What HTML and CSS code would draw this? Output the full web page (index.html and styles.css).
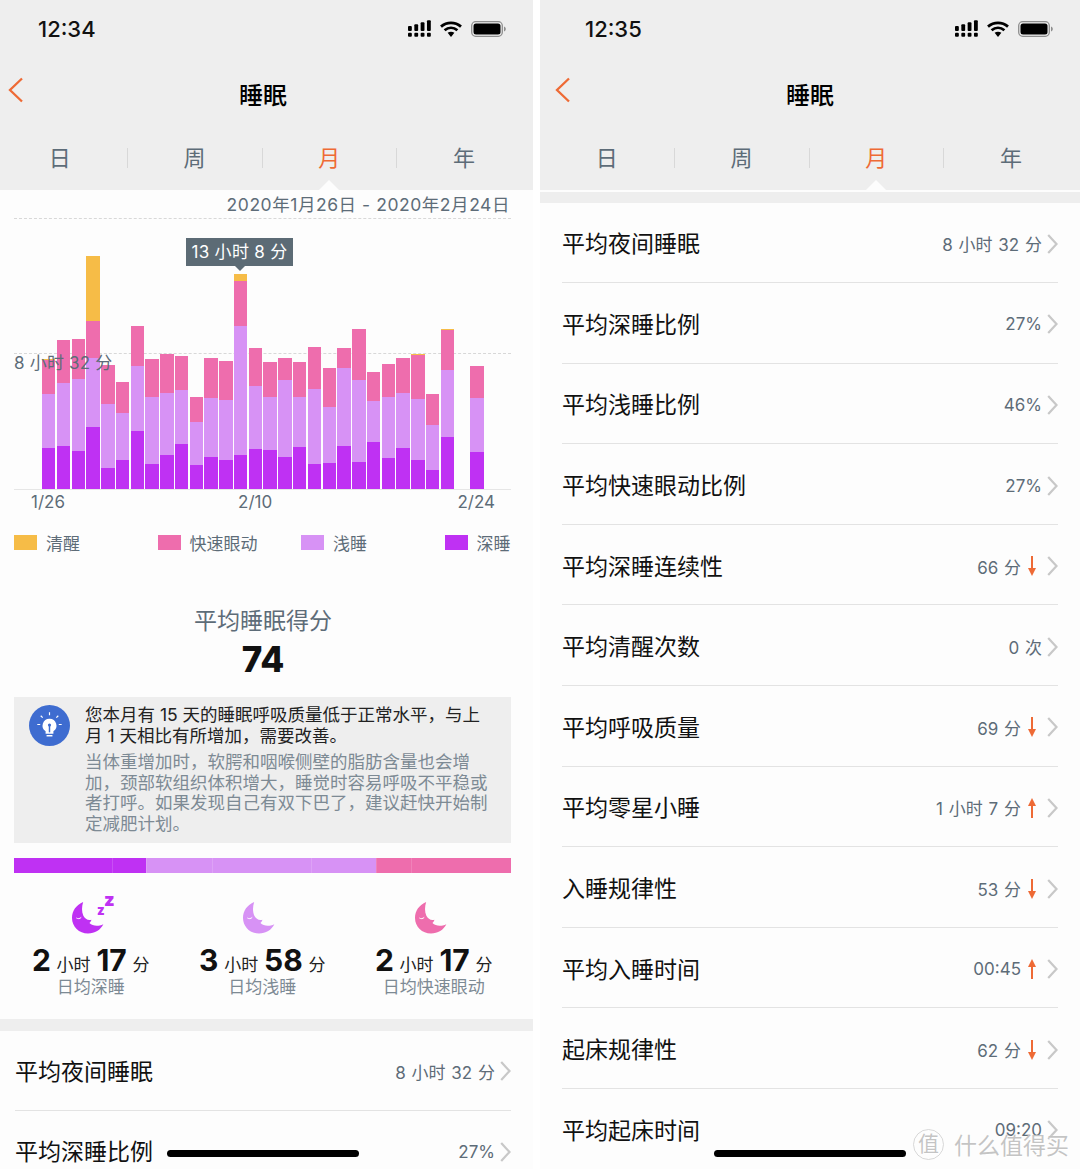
FILE: index.html
```html
<!DOCTYPE html>
<html lang="zh-CN">
<head>
    <meta charset="UTF-8">
    <meta name="viewport" content="width=device-width, initial-scale=1.0">
    <title>睡眠</title>
    <link rel="stylesheet" href="styles.css">
</head>
<body>
<svg class="defs" width="0" height="0">
    <symbol id="signal" viewBox="0 0 24 17">
        <g fill="#000">
            <rect x="0" y="6" width="4" height="5" rx="1"/><rect x="6.600" y="4" width="4" height="7" rx="1"/><rect x="13.200" y="2" width="4" height="9" rx="1"/><rect x="19.800" y="0" width="4" height="11" rx="1"/>
            <rect x="0" y="13" width="4" height="4" rx="1"/><rect x="6.600" y="13" width="4" height="4" rx="1"/><rect x="13.200" y="13" width="4" height="4" rx="1"/><rect x="19.800" y="13" width="4" height="4" rx="1"/>
        </g>
    </symbol>
    <symbol id="wifi" viewBox="0 0 22 16">
        <path d="M1 5.600C6.800.6 15.200.6 21 5.600M4.600 9.200c3.800-3.200 9-3.200 12.800 0" fill="none" stroke="#000" stroke-width="2.800"/>
        <path d="M7.600 11.800c2-1.500 4.800-1.500 6.800 0L11 16z" fill="#000"/>
    </symbol>
    <symbol id="battery" viewBox="0 0 35 16">
        <rect x=".7" y=".7" width="30.600" height="14.600" rx="4" fill="none" stroke="#8e8e8e" stroke-width="1.300"/>
        <rect x="2.500" y="2.500" width="27" height="11" rx="2.500" fill="#000"/>
        <path d="M33 5.500c1.300.4 1.800 1.400 1.800 2.500s-.5 2.100-1.800 2.500z" fill="#8e8e8e"/>
    </symbol>
    <symbol id="back" viewBox="0 0 16 26">
        <path d="M15 1.500 3 13l12 11.500" fill="none" stroke="#ee6a35" stroke-width="2.300"/>
    </symbol>
    <symbol id="chev" viewBox="0 0 11 20">
        <path d="M1.200 1 9.500 10l-8.300 9" fill="none" stroke="#c8c8c8" stroke-width="2.200"/>
    </symbol>
    <symbol id="down" viewBox="0 0 8 20">
        <path d="M4 0v13" stroke="#ee6a35" stroke-width="2"/><path d="M0 12h8l-4 8z" fill="#ee6a35"/>
    </symbol>
    <symbol id="up" viewBox="0 0 8 20">
        <path d="M4 20V7" stroke="#ee6a35" stroke-width="2"/><path d="M0 8h8L4 0z" fill="#ee6a35"/>
    </symbol>
    <symbol id="moon" viewBox="0 0 34 34">
        <path d="M11.500 1C4.500 4 0 10 0 17.500 0 26.500 7.300 33.500 16.500 33.500c7 0 13-3.700 15.800-9.500-5.500 2.500-11 2-14.300-1.300 1-.8 1.700-2 2-3.300-3.500 1-6.600-.8-8.300-4.100C9.800 10.800 10 5.500 11.500 1z" fill="currentColor"/>
        <path d="M4.500 17.500c1.500 1 3.500.9 5-.6" fill="none" stroke="#fff" stroke-width="1"/>
    </symbol>
</svg>

<div class="screens">
    <section class="phone phone-left">
        <div class="top">
            <div class="status">
                <span class="clock">12:34</span>
                <span class="status-icons">
                    <svg class="i-signal"><use href="#signal"/></svg>
                    <svg class="i-wifi"><use href="#wifi"/></svg>
                    <svg class="i-battery"><use href="#battery"/></svg>
                </span>
            </div>
            <div class="nav">
                <svg class="i-back"><use href="#back"/></svg>
                <h1>睡眠</h1>
            </div>
            <div class="tabs">
                <span class="tab">日</span><span class="tab">周</span><span class="tab active">月</span><span class="tab">年</span>
            </div>
        </div>

        <div class="daterange">2020年1月26日 - 2020年2月24日</div>

        <div class="chart">
            <div class="avg-line"></div>
            <div class="avg-label">8 小时 32 分</div>
            <div class="tip">13 小时 8 分</div>
            <div class="bars">
                <div class="bar"><i class="aw" style="height:1px"></i><i class="re" style="height:34px"></i><i class="li" style="height:54px"></i><i class="de" style="height:41px"></i></div>
                <div class="bar"><i class="re" style="height:43px"></i><i class="li" style="height:63px"></i><i class="de" style="height:43px"></i></div>
                <div class="bar"><i class="re" style="height:40px"></i><i class="li" style="height:72px"></i><i class="de" style="height:38px"></i></div>
                <div class="bar"><i class="aw" style="height:65px"></i><i class="re" style="height:37px"></i><i class="li" style="height:69px"></i><i class="de" style="height:62px"></i></div>
                <div class="bar"><i class="re" style="height:39px"></i><i class="li" style="height:64px"></i><i class="de" style="height:21px"></i></div>
                <div class="bar"><i class="re" style="height:31px"></i><i class="li" style="height:47px"></i><i class="de" style="height:29px"></i></div>
                <div class="bar"><i class="re" style="height:40px"></i><i class="li" style="height:65px"></i><i class="de" style="height:58px"></i></div>
                <div class="bar"><i class="re" style="height:38px"></i><i class="li" style="height:67px"></i><i class="de" style="height:25px"></i></div>
                <div class="bar"><i class="re" style="height:39px"></i><i class="li" style="height:62px"></i><i class="de" style="height:34px"></i></div>
                <div class="bar"><i class="re" style="height:34px"></i><i class="li" style="height:54px"></i><i class="de" style="height:45px"></i></div>
                <div class="bar"><i class="re" style="height:25px"></i><i class="li" style="height:43px"></i><i class="de" style="height:24px"></i></div>
                <div class="bar"><i class="re" style="height:40px"></i><i class="li" style="height:59px"></i><i class="de" style="height:32px"></i></div>
                <div class="bar"><i class="re" style="height:39px"></i><i class="li" style="height:60px"></i><i class="de" style="height:29px"></i></div>
                <div class="bar"><i class="aw" style="height:7px"></i><i class="re" style="height:45px"></i><i class="li" style="height:129px"></i><i class="de" style="height:34px"></i></div>
                <div class="bar"><i class="re" style="height:38px"></i><i class="li" style="height:63px"></i><i class="de" style="height:40px"></i></div>
                <div class="bar"><i class="re" style="height:35px"></i><i class="li" style="height:53px"></i><i class="de" style="height:39px"></i></div>
                <div class="bar"><i class="re" style="height:22px"></i><i class="li" style="height:77px"></i><i class="de" style="height:32px"></i></div>
                <div class="bar"><i class="re" style="height:35px"></i><i class="li" style="height:50px"></i><i class="de" style="height:42px"></i></div>
                <div class="bar"><i class="re" style="height:42px"></i><i class="li" style="height:75px"></i><i class="de" style="height:25px"></i></div>
                <div class="bar"><i class="re" style="height:39px"></i><i class="li" style="height:56px"></i><i class="de" style="height:26px"></i></div>
                <div class="bar"><i class="re" style="height:20px"></i><i class="li" style="height:78px"></i><i class="de" style="height:43px"></i></div>
                <div class="bar"><i class="re" style="height:51px"></i><i class="li" style="height:82px"></i><i class="de" style="height:27px"></i></div>
                <div class="bar"><i class="re" style="height:29px"></i><i class="li" style="height:41px"></i><i class="de" style="height:47px"></i></div>
                <div class="bar"><i class="re" style="height:33px"></i><i class="li" style="height:61px"></i><i class="de" style="height:31px"></i></div>
                <div class="bar"><i class="re" style="height:35px"></i><i class="li" style="height:55px"></i><i class="de" style="height:41px"></i></div>
                <div class="bar"><i class="aw" style="height:1px"></i><i class="re" style="height:44px"></i><i class="li" style="height:61px"></i><i class="de" style="height:29px"></i></div>
                <div class="bar"><i class="re" style="height:31px"></i><i class="li" style="height:45px"></i><i class="de" style="height:19px"></i></div>
                <div class="bar"><i class="aw" style="height:1px"></i><i class="re" style="height:40px"></i><i class="li" style="height:67px"></i><i class="de" style="height:52px"></i></div>
                <div class="bar"></div>
                <div class="bar"><i class="re" style="height:32px"></i><i class="li" style="height:54px"></i><i class="de" style="height:37px"></i></div>
            </div>
            <div class="axis"><span>1/26</span><span class="axis-mid">2/10</span><span>2/24</span></div>
        </div>

        <div class="legend">
            <span class="key"><i class="aw"></i>清醒</span>
            <span class="key"><i class="re"></i>快速眼动</span>
            <span class="key"><i class="li"></i>浅睡</span>
            <span class="key"><i class="de"></i>深睡</span>
        </div>

        <div class="score">
            <div class="score-title">平均睡眠得分</div>
            <div class="score-num">74</div>
        </div>

        <div class="tipbox">
            <svg class="bulb" viewBox="0 0 42 42">
                <circle cx="21" cy="21" r="21" fill="#3e6cd0"/>
                <path d="M21 14a7 7 0 0 0-4 12.800v2.700h8v-2.700A7 7 0 0 0 21 14z" fill="#fff"/>
                <path d="M18 31.500h6" stroke="#fff" stroke-width="1.500"/>
                <path d="M21 28v-7" stroke="#3e6cd0" stroke-width="1.500"/><circle cx="21" cy="20.500" r="1.600" fill="#3e6cd0"/>
                <path d="M21 7.500v3M12 11l2 2M30 11l-2 2M8.500 20h3M30.500 20h3" stroke="#fff" stroke-width="1.200"/>
            </svg>
            <div class="tipbox-text">
                <p class="lead">您本月有 15 天的睡眠呼吸质量低于正常水平，与上月 1 天相比有所增加，需要改善。</p>
                <p class="more">当体重增加时，软腭和咽喉侧壁的脂肪含量也会增加，颈部软组织体积增大，睡觉时容易呼吸不平稳或者打呼。如果发现自己有双下巴了，建议赶快开始制定减肥计划。</p>
            </div>
        </div>

        <div class="ratio">
            <i class="de" style="flex:99"></i><i class="de" style="flex:33"></i>
            <i class="li" style="flex:66"></i><i class="li" style="flex:99"></i><i class="li" style="flex:65"></i>
            <i class="re" style="flex:34"></i><i class="re" style="flex:100"></i>
        </div>

        <div class="stats">
            <div class="stat">
                <span class="moon-wrap">
                    <svg class="moon c-de"><use href="#moon"/></svg>
                    <b class="z-small c-de">z</b><b class="z-big c-de">z</b>
                </span>
                <div class="stat-val"><b>2</b> 小时 <b>17</b> 分</div>
                <div class="stat-name">日均深睡</div>
            </div>
            <div class="stat">
                <span class="moon-wrap"><svg class="moon c-li"><use href="#moon"/></svg></span>
                <div class="stat-val"><b>3</b> 小时 <b>58</b> 分</div>
                <div class="stat-name">日均浅睡</div>
            </div>
            <div class="stat">
                <span class="moon-wrap"><svg class="moon c-re"><use href="#moon"/></svg></span>
                <div class="stat-val"><b>2</b> 小时 <b>17</b> 分</div>
                <div class="stat-name">日均快速眼动</div>
            </div>
        </div>

        <div class="band"></div>

        <div class="rows rows-short">
            <div class="row"><span class="label">平均夜间睡眠</span><span class="val">8 小时 32 分</span><svg class="chev"><use href="#chev"/></svg></div>
            <div class="row"><span class="label">平均深睡比例</span><span class="val">27%</span><svg class="chev"><use href="#chev"/></svg></div>
        </div>
        <div class="home"></div>
    </section>

    <section class="phone">
        <div class="top">
            <div class="status">
                <span class="clock">12:35</span>
                <span class="status-icons">
                    <svg class="i-signal"><use href="#signal"/></svg>
                    <svg class="i-wifi"><use href="#wifi"/></svg>
                    <svg class="i-battery"><use href="#battery"/></svg>
                </span>
            </div>
            <div class="nav">
                <svg class="i-back"><use href="#back"/></svg>
                <h1>睡眠</h1>
            </div>
            <div class="tabs">
                <span class="tab">日</span><span class="tab">周</span><span class="tab active">月</span><span class="tab">年</span>
            </div>
        </div>
        <div class="band band-top"></div>

        <div class="rows rows-full">
            <div class="row"><span class="label">平均夜间睡眠</span><span class="val">8 小时 32 分</span><svg class="chev"><use href="#chev"/></svg></div>
            <div class="row"><span class="label">平均深睡比例</span><span class="val">27%</span><svg class="chev"><use href="#chev"/></svg></div>
            <div class="row"><span class="label">平均浅睡比例</span><span class="val">46%</span><svg class="chev"><use href="#chev"/></svg></div>
            <div class="row"><span class="label">平均快速眼动比例</span><span class="val">27%</span><svg class="chev"><use href="#chev"/></svg></div>
            <div class="row"><span class="label">平均深睡连续性</span><span class="val">66 分</span><svg class="arrow"><use href="#down"/></svg><svg class="chev"><use href="#chev"/></svg></div>
            <div class="row"><span class="label">平均清醒次数</span><span class="val">0 次</span><svg class="chev"><use href="#chev"/></svg></div>
            <div class="row"><span class="label">平均呼吸质量</span><span class="val">69 分</span><svg class="arrow"><use href="#down"/></svg><svg class="chev"><use href="#chev"/></svg></div>
            <div class="row"><span class="label">平均零星小睡</span><span class="val">1 小时 7 分</span><svg class="arrow"><use href="#up"/></svg><svg class="chev"><use href="#chev"/></svg></div>
            <div class="row"><span class="label">入睡规律性</span><span class="val">53 分</span><svg class="arrow"><use href="#down"/></svg><svg class="chev"><use href="#chev"/></svg></div>
            <div class="row"><span class="label">平均入睡时间</span><span class="val">00:45</span><svg class="arrow"><use href="#up"/></svg><svg class="chev"><use href="#chev"/></svg></div>
            <div class="row"><span class="label">起床规律性</span><span class="val">62 分</span><svg class="arrow"><use href="#down"/></svg><svg class="chev"><use href="#chev"/></svg></div>
            <div class="row"><span class="label">平均起床时间</span><span class="val">09:20</span><svg class="chev"><use href="#chev"/></svg></div>
        </div>
        <div class="home"></div>
    </section>
</div>

<div class="watermark"><span class="wm-logo">值</span><span>什么值得买</span></div>
</body>
</html>
```

FILE: styles.css
```css
html, body {
    margin: 0;
    padding: 0;
    background: #fff;
}
body {
    width: 1080px;
    height: 1169px;
    overflow: hidden;
    position: relative;
    font-family: Inter, "Noto Sans CJK SC", sans-serif;
    color: #5d6c78;
}
.defs {
    position: absolute;
}
.screens {
    display: flex;
    gap: 7px;
}
.phone {
    position: relative;
    flex: none;
    width: 540px;
    height: 1169px;
    overflow: hidden;
    background: #fdfdfd;
}
/* the left shot is cropped 7px on its left side */
.phone-left {
    margin-left: -7px;
}

/* header */
.top {
    background: #eeeeee;
    height: 190px;
}
.status {
    display: flex;
    justify-content: space-between;
    align-items: center;
    height: 57px;
    padding: 0 27px 0 45px;
}
.clock {
    font-size: 22px;
    font-weight: 500;
    color: #111;
}
.status-icons {
    display: flex;
    align-items: center;
    gap: 9px;
}
.i-signal { width: 23px; height: 17px; }
.i-wifi { width: 22px; height: 16px; }
.i-battery { width: 35px; height: 16px; }
.nav {
    position: relative;
    height: 64px;
    text-align: center;
}
.nav h1 {
    margin: 0;
    font-size: 24px;
    font-weight: 500;
    line-height: 78px;
    color: #000;
}
.i-back {
    position: absolute;
    left: 14px;
    top: 20px;
    width: 16px;
    height: 26px;
}
.tabs {
    display: flex;
    padding: 5px 2px 0 0;
    height: 69px;
    box-sizing: border-box;
    align-items: center;
}
.tab {
    flex: 1;
    text-align: center;
    font-size: 22px;
    line-height: 20px;
    border-left: 1px solid #d8d8d8;
}
.tab:first-child {
    border-left: 0;
}
.tab.active {
    position: relative;
    color: #ee6a35;
}
.tab.active::after {
    content: "";
    position: absolute;
    left: 50%;
    bottom: -22px;
    margin-left: -10px;
    border: 10px solid transparent;
    border-top: 0;
    border-bottom-color: #fdfdfd;
}

/* left screen chart */
.daterange {
    text-align: right;
    padding: 4px 23px 0 0;
    height: 24px;
    line-height: 22px;
    font-size: 17.500px;
    letter-spacing: .55px;
}
.chart {
    position: relative;
    margin: 0 22px 0 21px;
    height: 298px;
    border-top: 1px dashed #d8d8d8;
}
.avg-line {
    position: absolute;
    left: 0;
    right: 0;
    top: 134px;
    border-top: 1px dashed #d8d8d8;
}
.avg-label {
    position: absolute;
    left: 0;
    top: 134px;
    font-size: 17px;
    line-height: 20px;
    letter-spacing: .2px;
    z-index: 2;
}
.tip {
    position: absolute;
    left: 172px;
    top: 19px;
    width: 107px;
    height: 28px;
    line-height: 28px;
    background: #5c6b75;
    color: #fff;
    font-size: 17px;
    letter-spacing: .3px;
    text-align: center;
    white-space: nowrap;
    z-index: 2;
}
.tip::after {
    content: "";
    position: absolute;
    left: 49px;
    bottom: -5px;
    border: 5px solid transparent;
    border-bottom: 0;
    border-top-color: #5c6b75;
}
.bars {
    position: absolute;
    left: 28px;
    top: 0;
    width: 441.500px;
    height: 270px;
    display: flex;
    gap: 1.300px;
    align-items: flex-end;
}
.bars::before {
    content: "";
    position: absolute;
    left: -28px;
    right: -27.500px;
    bottom: -1px;
    border-bottom: 1px solid #e6e6e6;
}
.bar {
    flex: 1;
    display: flex;
    flex-direction: column;
}
.bar i {
    display: block;
}
.aw { background: #f6bc47; }
.re { background: #ee6dad; }
.li { background: #d792f5; }
.de { background: #bf31f3; }
.c-de { color: #bf31f3; }
.c-li { color: #d792f5; }
.c-re { color: #ee6dad; }
.axis {
    position: absolute;
    left: 17px;
    right: 16px;
    top: 272px;
    display: flex;
    justify-content: space-between;
    font-size: 17px;
    line-height: 22px;
}
.axis-mid {
    margin-right: 12px;
}
.legend {
    display: grid;
    grid-template-columns: repeat(3, 143.500px) auto;
    margin: 0 22px 0 21px;
    height: 50px;
    align-items: center;
}
.key {
    display: flex;
    align-items: center;
    font-size: 17px;
}
.key i {
    width: 23px;
    height: 15px;
    margin-right: 9px;
}

/* score */
.score {
    text-align: center;
    padding-top: 39px;
    height: 130px;
    box-sizing: border-box;
}
.score-title {
    font-size: 23px;
    line-height: 30px;
}
.score-num {
    font-size: 35px;
    font-weight: 800;
    line-height: 46px;
    color: #111;
}
.tipbox {
    display: flex;
    margin: 0 22px 0 21px;
    padding: 8px 0 8px 15px;
    background: #eeeeee;
    gap: 15px;
    height: 146px;
    box-sizing: border-box;
}
.bulb {
    flex: none;
    width: 41px;
    height: 41px;
}
.tipbox-text {
    width: 410px;
}
.tipbox-text p {
    margin: 0;
    font-size: 17.500px;
    line-height: 20.500px;
}
.lead {
    color: #222;
    padding-bottom: 6px;
}
.more {
    color: #7d8a94;
}
.ratio {
    display: flex;
    height: 15px;
    margin: 15px 22px 0 21px;
}
.ratio i + i {
    border-left: 1px solid rgba(255, 255, 255, .15);
}

/* stats */
.stats {
    display: grid;
    grid-template-columns: repeat(3, 171.500px);
    margin-left: 12px;
    padding-top: 28px;
    height: 146px;
    box-sizing: border-box;
}
.stat {
    text-align: center;
}
.moon-wrap {
    position: relative;
    display: block;
    height: 33px;
}
.moon {
    width: 33px;
    height: 33px;
    margin-left: -5px;
}
.z-small, .z-big {
    position: absolute;
    font-weight: 900;
    line-height: 1;
}
.z-small {
    left: 92px;
    top: 3px;
    font-size: 13px;
}
.z-big {
    left: 99px;
    top: -10px;
    font-size: 18px;
}
.stat-val {
    font-size: 17px;
    word-spacing: 1px;
    color: #222;
    line-height: 36px;
    margin-top: 8px;
    white-space: nowrap;
}
.stat-val b {
    font-size: 30px;
    font-weight: 700;
    color: #111;
}
.stat-name {
    font-size: 17px;
    line-height: 20px;
    margin-top: -6px;
    color: #7d8a94;
}
.band {
    height: 12px;
    background: #eeeeee;
}
.band-top {
    margin-top: 2px;
    height: 11px;
}

/* list rows */
.rows {
    margin: 0 22px;
}
.rows-short {
    margin-top: -1px;
}
.rows-full {
    margin-top: -.5px;
}
.row {
    display: flex;
    align-items: center;
    height: 79.600px;
    border-bottom: 1px solid #e3e3e3;
}
.rows .row:last-child {
    border-bottom: 0;
}
.label {
    flex: 1;
    font-size: 23px;
    color: #111;
}
.val {
    font-size: 17px;
    word-spacing: 1px;
    margin-top: 3px;
}
.arrow {
    width: 8px;
    height: 20px;
    margin: 3px 6px 0 7px;
}
.chev {
    width: 11px;
    height: 20px;
    margin: 3px 0 0 5px;
}
.home {
    position: absolute;
    left: 174px;
    top: 1150px;
    width: 192px;
    height: 7px;
    border-radius: 4px;
    background: #000;
}

.watermark {
    position: absolute;
    left: 913px;
    top: 1127px;
    display: flex;
    align-items: center;
    gap: 10px;
    font-size: 23px;
    color: rgba(170, 170, 170, .7);
    text-shadow: 0 0 1px #fff, 1px 1px 0 #fff;
    white-space: nowrap;
}
.wm-logo {
    width: 29px;
    height: 29px;
    line-height: 27px;
    font-size: 21px;
    text-align: center;
    border: 1px solid rgba(200, 200, 200, .7);
    border-radius: 50%;
}
```
